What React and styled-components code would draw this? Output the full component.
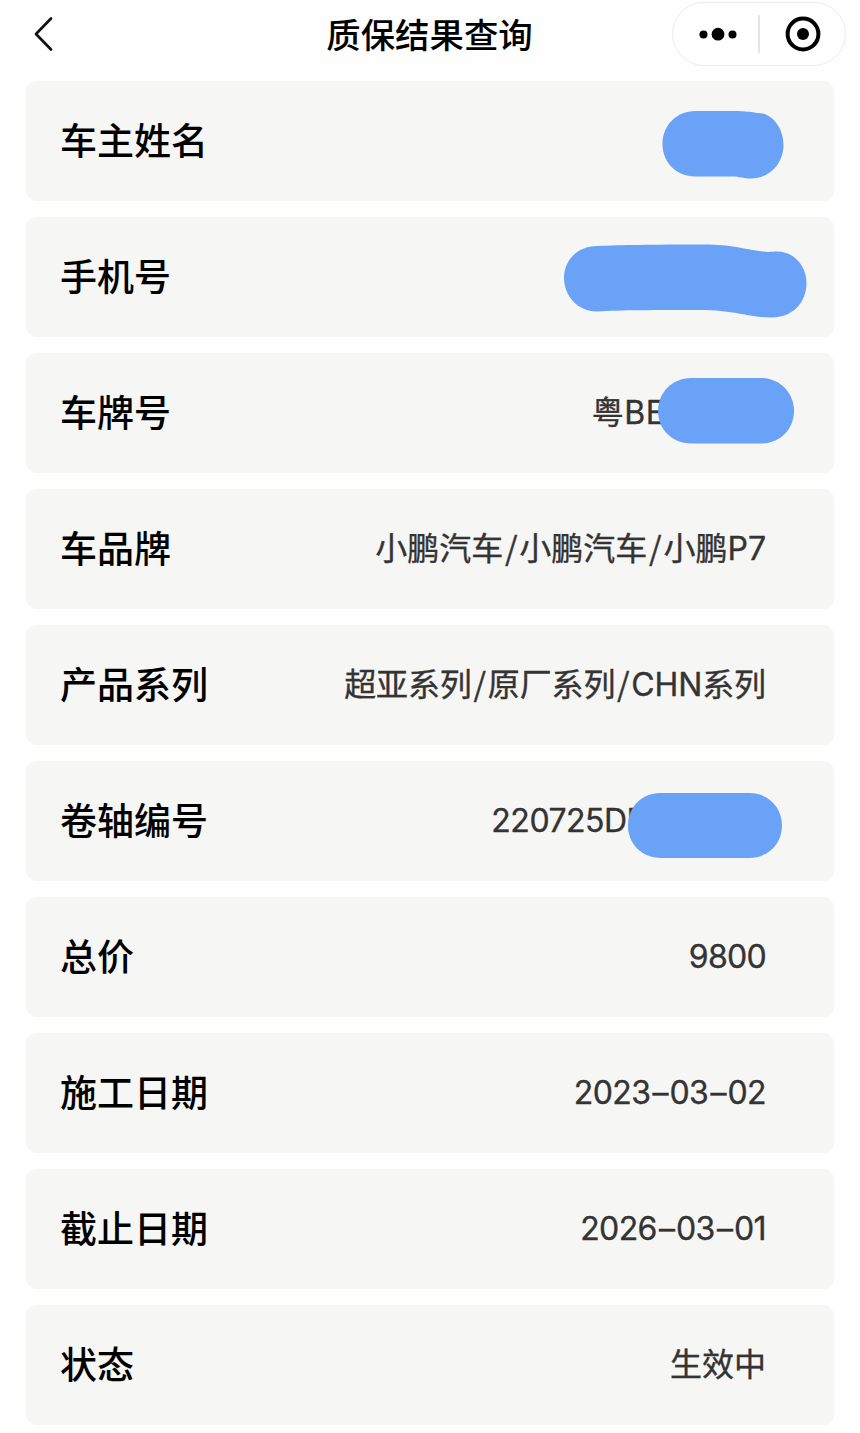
import React from 'react';
import styled, { createGlobalStyle } from 'styled-components';

const GlobalStyle = createGlobalStyle`
  * { box-sizing: border-box; }
  body {
    margin: 0;
    background: #fefefe;
    font-family: Inter, "Noto Sans CJK SC", sans-serif;
    color: #000;
  }
`;

const Page = styled.div`
  width: 860px;
  height: 1433px;
  overflow: hidden;
  background: #fefefe;
`;

const NavBar = styled.header`
  display: grid;
  grid-template-columns: 1fr auto 1fr;
  align-items: center;
  height: 68px;
  padding: 0 14px;
`;

const BackButton = styled.button`
  display: flex;
  width: 28px;
  height: 40px;
  margin-left: 16px;
  padding: 0;
  border: 0;
  background: none;
`;

const Title = styled.h1`
  margin: 0;
  padding: 0 1px 2px 0;
  font: 500 34.4px/48px "Noto Sans CJK SC", sans-serif;
  white-space: nowrap;
`;

const Capsule = styled.div`
  display: flex;
  align-items: center;
  justify-self: end;
  width: 174px;
  height: 64px;
  border: 1px solid #ebebeb;
  border-radius: 32px;
  background: #fff;
`;

const CapsuleButton = styled.button`
  display: flex;
  flex: 1 1 50%;
  align-items: center;
  justify-content: center;
  padding: 0 0 0 ${(p) => p.$shift || 0}px;
  border: 0;
  background: none;
`;

const Divider = styled.span`
  flex: none;
  width: 1.5px;
  height: 38px;
  background: #e4e4e4;
`;

const List = styled.main`
  display: flex;
  flex-direction: column;
  gap: 16px;
  padding: 13px 26px 0;
`;

const Card = styled.section`
  position: relative;
  display: flex;
  align-items: center;
  justify-content: space-between;
  height: 120px;
  padding: 0 68px 0 34px;
  border-radius: 11px;
  background: #f6f6f4;
`;

const Label = styled.span`
  padding-bottom: 4px;
  font: 500 37px/54px "Noto Sans CJK SC", sans-serif;
  white-space: nowrap;
`;

const Value = styled.span`
  margin-right: ${(p) => p.$inset || 0}px;
  padding-bottom: 1px;
  font-size: 32px;
  line-height: 48px;
  letter-spacing: ${(p) => p.$tracking || 0}px;
  color: #333;
  -webkit-text-stroke: 0.35px #333;
  white-space: nowrap;
`;

const Slash = styled.span`
  padding: 0 1.8px;
  font-family: "Noto Sans CJK SC", sans-serif;
  line-height: 0;
`;

const Dash = styled.span`
  padding: 0 1.5px 0 2.3px;
`;

const Mask = styled.svg`
  position: absolute;
  top: 0;
  left: 0;
  width: 808px;
  height: 120px;
  fill: #6aa2f8;
`;

const rows = [
  { label: '车主姓名', mask: 'M669 30H706C724 30 729 32 737 32.500C749 36 757.500 49 757.500 64C757.500 83 743 97.500 725 97.500C716 97.500 716 95.500 704 95.500H669C650 95.500 636.500 81 636.500 63C636.500 44 651 30 669 30Z' },
  { label: '手机号', mask: 'M571 29C595 28 624 27.500 678 27.500C705 27.500 717 32 737 34.500C743 35.500 746 34.500 751 34.500C768 34.500 780.500 49 780.500 66C780.500 86 766 100.500 746 100.500C722 100.500 710 93 673 93C628 93 595 93 571 94.500C552 94.500 538 79 538 61C538 43 552 29 571 29Z' },
  { label: '车牌号', value: '粤BE', inset: 100.5, tracking: 0.5, mask: 'M665 25H735C754 25 768 40 768 58C768 76 754 90.500 735 90.500H665C646 90.500 632 76 632 58C632 40 646 25 665 25Z' },
  { label: '车品牌', value: '小鹏汽车/小鹏汽车/小鹏P7' },
  { label: '产品系列', value: '超亚系列/原厂系列/CHN系列', tracking: -0.12 },
  { label: '卷轴编号', value: '220725DF', inset: 121, tracking: -0.5, mask: 'M634 32H723C742 32 756 46 756 64.500C756 83 742 97 723 97H635C616 97 602 83 602 64.500C602 46 616 32 634 32Z' },
  { label: '总价', value: '9800', tracking: -0.7 },
  { label: '施工日期', value: '2023–03–02', tracking: -0.6 },
  { label: '截止日期', value: '2026–03–01', tracking: -0.6 },
  { label: '状态', value: '生效中' },
];

const renderValue = (text) =>
  text.split(/([/–])/).map((part, i) => {
    if (part === '/') return <Slash key={i}>/</Slash>;
    if (part === '–') return <Dash key={i}>–</Dash>;
    return part;
  });

export default function App() {
  return (
    <Page>
      <GlobalStyle />
      <NavBar>
        <BackButton aria-label="返回">
          <svg width="28" height="40" viewBox="0 0 28 40" fill="none" stroke="#111" strokeWidth="2.7" strokeLinecap="round" strokeLinejoin="round">
            <path d="M21 4.500L6 20L21 35.500" />
          </svg>
        </BackButton>
        <Title>质保结果查询</Title>
        <Capsule>
          <CapsuleButton aria-label="更多" $shift={4}>
            <svg width="40" height="16" viewBox="0 0 40 16">
              <circle cx="5.500" cy="8.500" r="4" />
              <circle cx="20" cy="8.200" r="6.400" />
              <circle cx="34.500" cy="8.500" r="4" />
            </svg>
          </CapsuleButton>
          <Divider />
          <CapsuleButton aria-label="关闭" $shift={1}>
            <svg width="36" height="36" viewBox="0 0 36 36">
              <circle cx="18" cy="18" r="15.400" fill="none" stroke="#000" strokeWidth="4" />
              <circle cx="18" cy="18" r="6" />
            </svg>
          </CapsuleButton>
        </Capsule>
      </NavBar>
      <List>
        {rows.map((row) => (
          <Card key={row.label}>
            <Label>{row.label}</Label>
            {row.value && (
              <Value $inset={row.inset} $tracking={row.tracking}>{renderValue(row.value)}</Value>
            )}
            {row.mask && <Mask viewBox="0 0 808 120"><path d={row.mask} /></Mask>}
          </Card>
        ))}
      </List>
    </Page>
  );
}
